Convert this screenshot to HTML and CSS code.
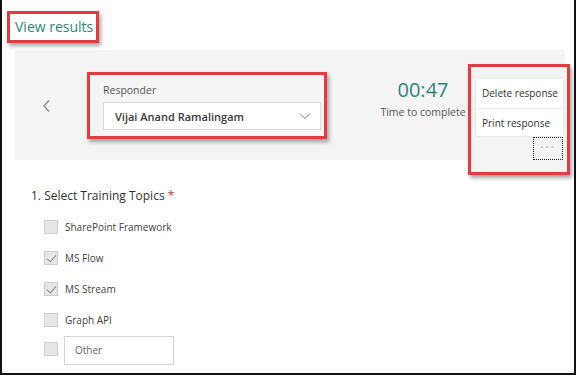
FILE: index.html
```html
<!DOCTYPE html>
<html lang="en">
<head>
    <meta charset="UTF-8">
    <title>View results</title>
    <link rel="stylesheet" href="styles.css">
</head>
<body>
    <div class="frame">
        <div class="header">
            <span class="mark title-mark">View results</span>
        </div>

        <div class="panel">
            <span class="nav-prev">
                <svg width="10" height="14" viewBox="0 0 10 14"><path d="M7 1.5 L2 7 L7 12.5" fill="none" stroke="#8a8a8a" stroke-width="1.4"/></svg>
            </span>

            <div class="mark responder">
                <div class="responder-label">Responder</div>
                <div class="responder-select">
                    <span>Vijai Anand Ramalingam</span>
                    <svg width="12" height="8" viewBox="0 0 12 8"><path d="M1 1.5 L6 6.5 L11 1.5" fill="none" stroke="#777" stroke-width="1"/></svg>
                </div>
            </div>

            <div class="timer">
                <div class="timer-value">00:47</div>
                <div class="timer-label">Time to complete</div>
            </div>

            <!-- menu opened from the ... button -->
            <div class="mark menu-mark">
                <ul class="menu">
                    <li>Delete response</li>
                    <li>Print response</li>
                </ul>
                <div class="more">&middot;&middot;&middot;</div>
            </div>
        </div>

        <div class="question">
            <div class="question-title">1. Select Training Topics <span class="req">*</span></div>
            <div class="option"><span class="box"></span>SharePoint Framework</div>
            <div class="option"><span class="box checked"></span>MS Flow</div>
            <div class="option"><span class="box checked"></span>MS Stream</div>
            <div class="option"><span class="box"></span>Graph API</div>
            <div class="option other"><span class="box"></span><span class="other-input">Other</span></div>
        </div>
    </div>
</body>
</html>
```

FILE: styles.css
```css
* {
    box-sizing: border-box;
}
body {
    margin: 0;
    font-family: "Open Sans", "Noto Sans", sans-serif;
    color: #333;
}
.frame {
    width: 576px;
    height: 375px;
    border-left: 2px solid #111;
    border-right: 2px solid #111;
    border-bottom: 2px solid #111;
    background: #fff;
    overflow: hidden;
}
.mark {
    border: 3px solid #e8393d;
    box-shadow: 2px 3px 4px rgba(0, 0, 0, 0.35);
}
.header {
    height: 50px;
    padding: 11px 0 0 5px;
}
.title-mark {
    display: inline-block;
    width: 92px;
    height: 32px;
    padding: 0 0 0 5px;
    line-height: 25px;
    font-size: 14px;
    color: #2f8579;
}
.panel {
    position: relative;
    margin-left: 13px;
    width: 550px;
    height: 110px;
    background: #f4f4f4;
    display: flex;
    align-items: flex-start;
}
.nav-prev {
    margin: 46px 0 0 27px;
    width: 10px;
    height: 14px;
}
.responder {
    margin: 22px 0 0 35px;
    width: 240px;
    height: 67px;
    padding: 5px 3px 0 13px;
    background: #f4f4f4;
}
.responder-label {
    font-size: 10.5px;
    color: #555;
    height: 22px;
    line-height: 20px;
}
.responder-select {
    width: 218px;
    height: 28px;
    background: #fff;
    border: 1px solid #dcdcdc;
    display: flex;
    align-items: center;
    justify-content: space-between;
    padding: 0 9px 0 11px;
    font-size: 11px;
    font-weight: 600;
    color: #3a3a3a;
}
.timer {
    margin: 26px 0 0 53px;
    width: 86px;
    text-align: center;
}
.timer-value {
    font-size: 20px;
    color: #2f8579;
    line-height: 28px;
}
.timer-label {
    font-size: 10.5px;
    color: #555;
    line-height: 16px;
    white-space: nowrap;
}
.menu-mark {
    position: absolute;
    left: 453px;
    top: 14px;
    width: 102px;
    height: 111px;
    padding: 12px 4px 0 5px;
    background: #f4f4f4;
}
.menu {
    list-style: none;
    margin: 0;
    padding: 0;
    background: #fff;
    box-shadow: 0 0 2px rgba(0, 0, 0, 0.12);
}
.menu li {
    height: 28.5px;
    line-height: 28px;
    padding-left: 6px;
    font-size: 10px;
    color: #333;
    white-space: nowrap;
}
.menu li + li {
    border-top: 1px solid #f0f0f0;
}
.more {
    margin: 1px 0 0 57px;
    width: 30px;
    height: 23px;
    border: 1px dotted #222;
    text-align: center;
    line-height: 20px;
    font-size: 12px;
    color: #999;
    letter-spacing: 2px;
}
.question {
    padding: 25px 0 0 29px;
}
.question-title {
    font-size: 12px;
    color: #333;
    height: 26px;
    line-height: 22px;
}
.req {
    color: #d13438;
}
.option {
    display: flex;
    align-items: center;
    height: 31px;
    padding-left: 13px;
    font-size: 10px;
    color: #444;
}
.box {
    width: 14px;
    height: 14px;
    background: #e6e6e6;
    border: 1px solid #cfcfcf;
    margin-right: 7px;
    position: relative;
}
.box.checked::after {
    content: "";
    position: absolute;
    left: 4px;
    top: 1px;
    width: 4px;
    height: 8px;
    border-right: 1px solid #888;
    border-bottom: 1px solid #888;
    transform: rotate(40deg);
}
.other {
    height: 30px;
}
.other .box {
    margin-top: -2px;
}
.other-input {
    width: 110px;
    height: 29px;
    border: 1px solid #d4d4d4;
    margin-left: -1px;
    padding-left: 10px;
    line-height: 27px;
    color: #666;
}
```
